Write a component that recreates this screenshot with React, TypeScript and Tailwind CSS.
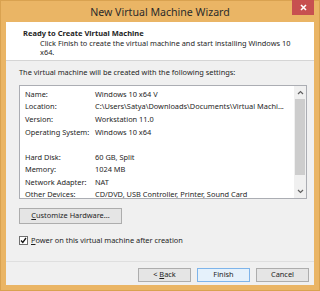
import React from "react";

const rows: [string, string][] = [
  ["Name:", "Windows 10 x64 V"],
  ["Location:", "C:\\Users\\Satya\\Downloads\\Documents\\Virtual Machi..."],
  ["Version:", "Workstation 11.0"],
  ["Operating System:", "Windows 10 x64"],
  ["", ""],
  ["Hard Disk:", "60 GB, Split"],
  ["Memory:", "1024 MB"],
  ["Network Adapter:", "NAT"],
  ["Other Devices:", "CD/DVD, USB Controller, Printer, Sound Card"],
];

export default function App() {
  return (
    <div
      className="w-[320px] h-[291px] bg-[#EAB565] border border-[#D9A250] flex flex-col text-[#1e1e1e]"
      style={{ fontFamily: '"Noto Sans", "Open Sans", sans-serif' }}
    >
      <div className="relative h-[21px] flex items-center justify-center">
        <span className="text-[10.6px] text-[#2b2b2b] leading-none pt-[1px]">New Virtual Machine Wizard</span>
        <div className="absolute right-[5px] top-[-1px] w-[22px] h-[15px] bg-[#C75050] flex items-center justify-center">
          <svg width="7" height="7" viewBox="0 0 7 7">
            <path d="M1 1 L6 6 M6 1 L1 6" stroke="#fff" strokeWidth="1.6" />
          </svg>
        </div>
      </div>
      <div className="mx-[5px] mb-[5px] flex-1 bg-[#F0F0F0] flex flex-col">
        <div className="h-[39px] bg-white border-b border-[#D5D5D5] flex flex-col pt-[6px]">
          <div className="pl-[17px] text-[7.5px] font-bold leading-[10px]">Ready to Create Virtual Machine</div>
          <div className="pl-[34px] text-[7.4px] leading-[9px] mt-[1px]">
            Click Finish to create the virtual machine and start installing Windows 10
            <br />
            x64.
          </div>
        </div>
        <div className="px-[13px] pt-[6px] text-[7.4px] leading-[10px]">
          The virtual machine will be created with the following settings:
        </div>
        <div className="ml-[13px] mr-[7px] mt-[8px] h-[114px] bg-white border border-[#ABADB3] flex">
          <div className="flex-1 pl-[5px] pt-[2px] text-[7.4px]">
            {rows.map(([k, v], i) => (
              <div key={i} className="flex h-[12.6px] items-center whitespace-nowrap">
                <div className="w-[70px]">{k}</div>
                <div>{v}</div>
              </div>
            ))}
          </div>
          <div className="w-[12px] flex flex-col bg-[#F0F0F0]">
            <div className="h-[13px] flex items-center justify-center">
              <svg width="7" height="5" viewBox="0 0 7 5">
                <path d="M1 4 L3.5 1.5 L6 4" stroke="#606060" strokeWidth="1.2" fill="none" />
              </svg>
            </div>
            <div className="mx-[1px] h-[76px] bg-[#CDCDCD]" />
            <div className="flex-1" />
            <div className="h-[13px] flex items-center justify-center">
              <svg width="7" height="5" viewBox="0 0 7 5">
                <path d="M1 1 L3.5 3.5 L6 1" stroke="#606060" strokeWidth="1.2" fill="none" />
              </svg>
            </div>
          </div>
        </div>
        <div className="ml-[13px] mt-[9px]">
          <button className="w-[103px] h-[16px] border border-[#ADADAD] bg-[#E5E5E5] text-[7.4px] leading-none flex items-center justify-center">
            <span><span className="underline">C</span>ustomize Hardware...</span>
          </button>
        </div>
        <div className="ml-[13px] mt-[11px] flex items-center gap-[3px] text-[7.4px]">
          <div className="w-[9px] h-[9px] border border-[#707070] bg-white flex items-center justify-center">
            <svg width="7" height="7" viewBox="0 0 7 7">
              <path d="M1 3.5 L2.8 5.5 L6 1" stroke="#111" strokeWidth="1.3" fill="none" />
            </svg>
          </div>
          <span><span className="underline">P</span>ower on this virtual machine after creation</span>
        </div>
        <div className="mt-[15px] border-t border-[#DFDFDF]" />
        <div className="flex justify-end gap-[6px] pr-[5px] mt-[6px]">
          <button className="w-[53px] h-[14px] border border-[#ADADAD] bg-[#E5E5E5] text-[7.4px] leading-none flex items-center justify-center">
            <span>&lt; <span className="underline">B</span>ack</span>
          </button>
          <button className="w-[53px] h-[14px] border border-[#7EB4EA] bg-[#E5F1FB] text-[7.4px] leading-none flex items-center justify-center">
            Finish
          </button>
          <button className="w-[53px] h-[14px] border border-[#ADADAD] bg-[#E5E5E5] text-[7.4px] leading-none flex items-center justify-center">
            Cancel
          </button>
        </div>
      </div>
    </div>
  );
}
